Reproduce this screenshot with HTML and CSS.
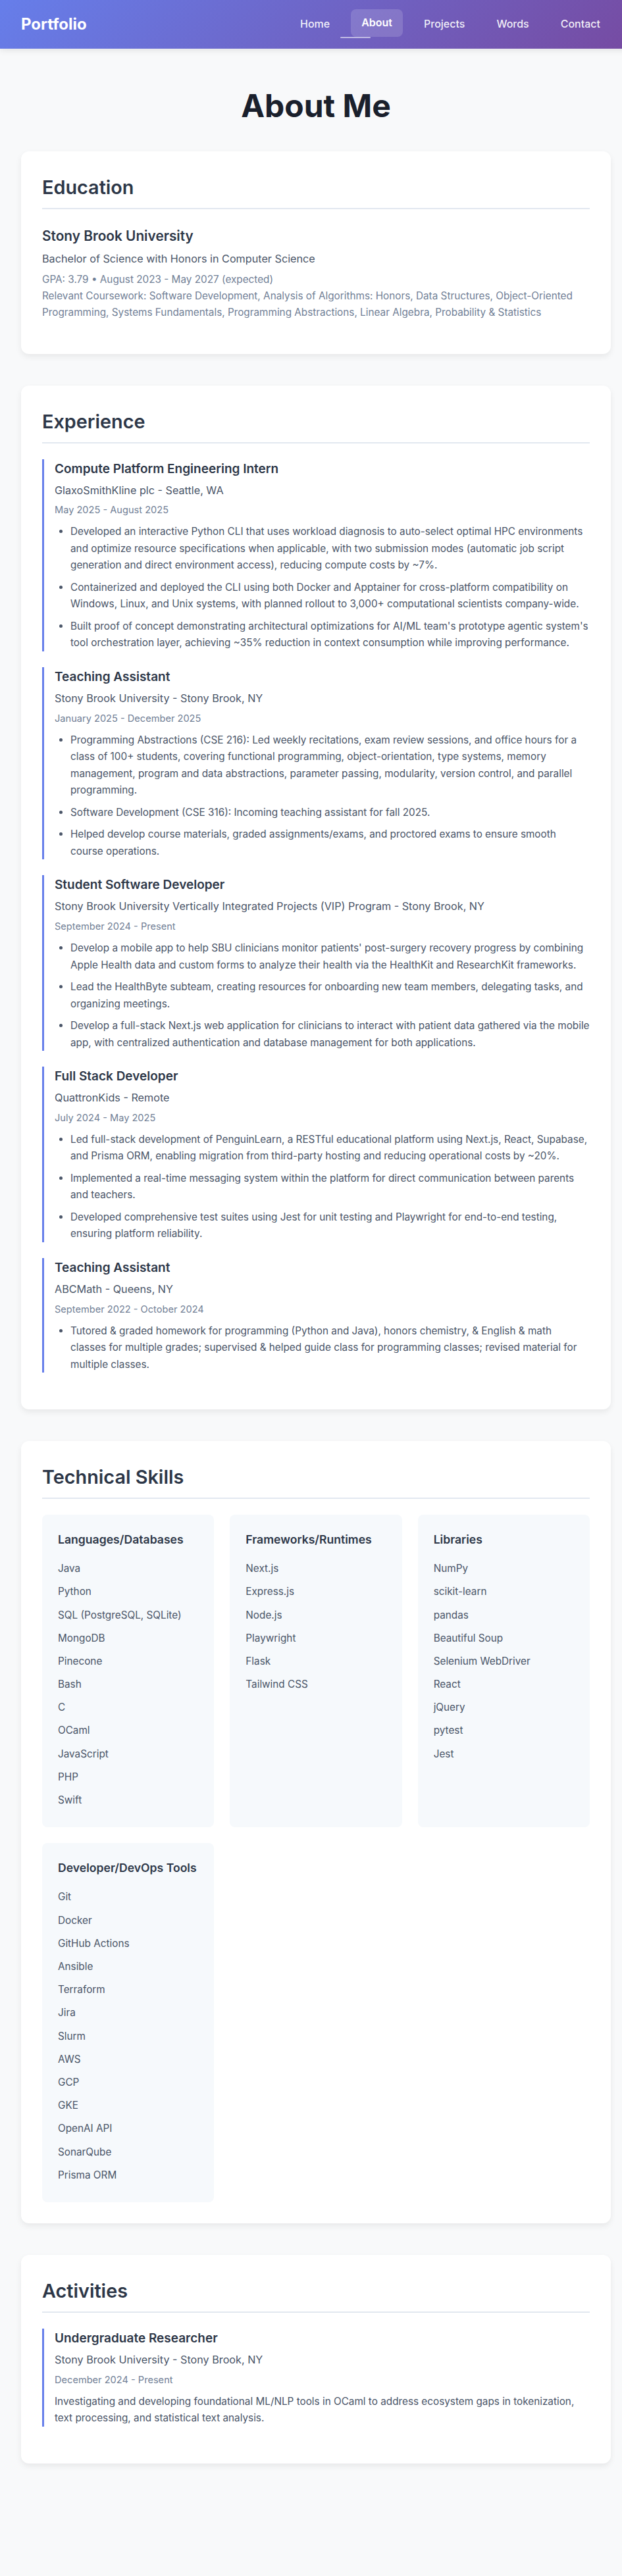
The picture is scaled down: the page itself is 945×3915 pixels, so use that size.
FILE: index.html
```html
<!DOCTYPE html>
<html lang="en">
<head>
<meta charset="utf-8">
<title>About Me - Portfolio</title>
<link rel="stylesheet" href="styles.css">
</head>
<body>
<div class="page">
  <header class="site-header">
    <div class="logo">Portfolio</div>
    <nav>
      <ul class="nav-list">
        <li><a class="nav-link" href="#">Home</a></li>
        <li><a class="nav-link active" href="#">About</a></li>
        <li><a class="nav-link" href="#">Projects</a></li>
        <li><a class="nav-link" href="#">Words</a></li>
        <li><a class="nav-link" href="#">Contact</a></li>
      </ul>
    </nav>
  </header>

  <main class="main">
    <h1 class="page-title">About Me</h1>

    <section class="card">
      <h2 class="section-title">Education</h2>
      <div class="edu-item">
        <h3 class="edu-school">Stony Brook University</h3>
        <p class="edu-degree">Bachelor of Science with Honors in Computer Science</p>
        <p class="edu-meta">GPA: 3.79 • August 2023 - May 2027 (expected)</p>
        <p class="edu-meta">Relevant Coursework: Software Development, Analysis of Algorithms: Honors, Data Structures, Object-Oriented Programming, Systems Fundamentals, Programming Abstractions, Linear Algebra, Probability &amp; Statistics</p>
      </div>
    </section>

    <section class="card">
      <h2 class="section-title">Experience</h2>

      <div class="job">
        <h3 class="job-title">Compute Platform Engineering Intern</h3>
        <p class="job-org">GlaxoSmithKline plc - Seattle, WA</p>
        <p class="job-date">May 2025 - August 2025</p>
        <ul class="job-points">
          <li>Developed an interactive Python CLI that uses workload diagnosis to auto-select optimal HPC environments and optimize resource specifications when applicable, with two submission modes (automatic job script generation and direct environment access), reducing compute costs by ~7%.</li>
          <li>Containerized and deployed the CLI using both Docker and Apptainer for cross-platform compatibility on Windows, Linux, and Unix systems, with planned rollout to 3,000+ computational scientists company-wide.</li>
          <li>Built proof of concept demonstrating architectural optimizations for AI/ML team's prototype agentic system's tool orchestration layer, achieving ~35% reduction in context consumption while improving performance.</li>
        </ul>
      </div>

      <div class="job">
        <h3 class="job-title">Teaching Assistant</h3>
        <p class="job-org">Stony Brook University - Stony Brook, NY</p>
        <p class="job-date">January 2025 - December 2025</p>
        <ul class="job-points">
          <li>Programming Abstractions (CSE 216): Led weekly recitations, exam review sessions, and office hours for a class of 100+ students, covering functional programming, object-orientation, type systems, memory management, program and data abstractions, parameter passing, modularity, version control, and parallel programming.</li>
          <li>Software Development (CSE 316): Incoming teaching assistant for fall 2025.</li>
          <li>Helped develop course materials, graded assignments/exams, and proctored exams to ensure smooth course operations.</li>
        </ul>
      </div>

      <div class="job">
        <h3 class="job-title">Student Software Developer</h3>
        <p class="job-org">Stony Brook University Vertically Integrated Projects (VIP) Program - Stony Brook, NY</p>
        <p class="job-date">September 2024 - Present</p>
        <ul class="job-points">
          <li>Develop a mobile app to help SBU clinicians monitor patients' post-surgery recovery progress by combining Apple Health data and custom forms to analyze their health via the HealthKit and ResearchKit frameworks.</li>
          <li>Lead the HealthByte subteam, creating resources for onboarding new team members, delegating tasks, and organizing meetings.</li>
          <li>Develop a full-stack Next.js web application for clinicians to interact with patient data gathered via the mobile app, with centralized authentication and database management for both applications.</li>
        </ul>
      </div>

      <div class="job">
        <h3 class="job-title">Full Stack Developer</h3>
        <p class="job-org">QuattronKids - Remote</p>
        <p class="job-date">July 2024 - May 2025</p>
        <ul class="job-points">
          <li>Led full-stack development of PenguinLearn, a RESTful educational platform using Next.js, React, Supabase, and Prisma ORM, enabling migration from third-party hosting and reducing operational costs by ~20%.</li>
          <li>Implemented a real-time messaging system within the platform for direct communication between parents and teachers.</li>
          <li>Developed comprehensive test suites using Jest for unit testing and Playwright for end-to-end testing, ensuring platform reliability.</li>
        </ul>
      </div>

      <div class="job">
        <h3 class="job-title">Teaching Assistant</h3>
        <p class="job-org">ABCMath - Queens, NY</p>
        <p class="job-date">September 2022 - October 2024</p>
        <ul class="job-points">
          <li>Tutored &amp; graded homework for programming (Python and Java), honors chemistry, &amp; English &amp; math classes for multiple grades; supervised &amp; helped guide class for programming classes; revised material for multiple classes.</li>
        </ul>
      </div>
    </section>

    <section class="card">
      <h2 class="section-title">Technical Skills</h2>
      <div class="skills-grid">
        <div class="skill-box">
          <h4 class="skill-title">Languages/Databases</h4>
          <ul class="skill-list">
            <li>Java</li>
            <li>Python</li>
            <li>SQL (PostgreSQL, SQLite)</li>
            <li>MongoDB</li>
            <li>Pinecone</li>
            <li>Bash</li>
            <li>C</li>
            <li>OCaml</li>
            <li>JavaScript</li>
            <li>PHP</li>
            <li>Swift</li>
          </ul>
        </div>
        <div class="skill-box">
          <h4 class="skill-title">Frameworks/Runtimes</h4>
          <ul class="skill-list">
            <li>Next.js</li>
            <li>Express.js</li>
            <li>Node.js</li>
            <li>Playwright</li>
            <li>Flask</li>
            <li>Tailwind CSS</li>
          </ul>
        </div>
        <div class="skill-box">
          <h4 class="skill-title">Libraries</h4>
          <ul class="skill-list">
            <li>NumPy</li>
            <li>scikit-learn</li>
            <li>pandas</li>
            <li>Beautiful Soup</li>
            <li>Selenium WebDriver</li>
            <li>React</li>
            <li>jQuery</li>
            <li>pytest</li>
            <li>Jest</li>
          </ul>
        </div>
        <div class="skill-box">
          <h4 class="skill-title">Developer/DevOps Tools</h4>
          <ul class="skill-list">
            <li>Git</li>
            <li>Docker</li>
            <li>GitHub Actions</li>
            <li>Ansible</li>
            <li>Terraform</li>
            <li>Jira</li>
            <li>Slurm</li>
            <li>AWS</li>
            <li>GCP</li>
            <li>GKE</li>
            <li>OpenAI API</li>
            <li>SonarQube</li>
            <li>Prisma ORM</li>
          </ul>
        </div>
      </div>
    </section>

    <section class="card">
      <h2 class="section-title">Activities</h2>
      <div class="job">
        <h3 class="job-title">Undergraduate Researcher</h3>
        <p class="job-org">Stony Brook University - Stony Brook, NY</p>
        <p class="job-date">December 2024 - Present</p>
        <p class="job-desc">Investigating and developing foundational ML/NLP tools in OCaml to address ecosystem gaps in tokenization, text processing, and statistical text analysis.</p>
      </div>
    </section>
  </main>
</div>
</body>
</html>
```
FILE: styles.css
```css
* {
  box-sizing: border-box;
}

html {
  overflow-x: hidden;
}

body {
  margin: 0;
  background: #f8f9fa;
  font-family: Inter, "Noto Sans", "Liberation Sans", sans-serif;
  color: #2d3748;
  line-height: 1.6;
}

.page {
  width: 960px;
}

/* Header */
.site-header {
  position: relative;
  z-index: 2;
  display: flex;
  align-items: center;
  justify-content: space-between;
  padding: 16px 32px;
  background: linear-gradient(135deg, #667eea 0%, #764ba2 100%);
  box-shadow: 0 2px 10px rgba(0, 0, 0, 0.1);
}

.logo {
  color: #ffffff;
  font-size: 24px;
  font-weight: 700;
  line-height: 1.4;
}

.nav-list {
  display: flex;
  gap: 16px;
  list-style: none;
  margin: 0;
  padding: 0;
}

.nav-link {
  position: relative;
  display: block;
  padding: 8px 16px;
  border-radius: 8px;
  color: rgba(255, 255, 255, 0.92);
  text-decoration: none;
  font-size: 16px;
  font-weight: 500;
  line-height: 25.6px;
}

.nav-link.active {
  color: #ffffff;
  font-weight: 600;
  background: rgba(255, 255, 255, 0.15);
  transform: translateY(-2px);
}

.nav-link.active::after {
  content: "";
  position: absolute;
  left: -16px;
  bottom: -2px;
  width: 46px;
  height: 2px;
  border-radius: 1px;
  background: rgba(255, 255, 255, 0.55);
}

/* Main */
.main {
  padding: 58px 32px 125px;
}

.page-title {
  margin: 0 0 41px;
  text-align: center;
  font-size: 48px;
  font-weight: 700;
  line-height: 1.2;
  color: #1a202c;
}

.card {
  background: #ffffff;
  border-radius: 12px;
  padding: 32px;
  margin-bottom: 48px;
  box-shadow: 0 4px 10px rgba(0, 0, 0, 0.07);
}

.section-title {
  margin: 0 0 24px;
  padding-bottom: 8px;
  border-bottom: 2px solid #e2e8f0;
  font-size: 28.8px;
  font-weight: 600;
  line-height: 46px;
  color: #2d3748;
}

/* Education */
.edu-item {
  margin-bottom: 18px;
}

.edu-school {
  margin: 0 0 6px;
  font-size: 20.8px;
  font-weight: 600;
  line-height: 33.3px;
  color: #2d3748;
}

.edu-degree {
  margin: 0 0 5px;
  font-size: 16.2px;
  line-height: 25.6px;
  color: #4a5568;
}

.edu-meta {
  margin: 0;
  font-size: 15.3px;
  line-height: 25.2px;
  color: #718096;
}

/* Jobs */
.job {
  border-left: 3px solid #667eea;
  padding-left: 16px;
  margin-bottom: 24px;
}

.job-title {
  margin: 0 0 4.5px;
  font-size: 19px;
  font-weight: 600;
  line-height: 30.7px;
  color: #2d3748;
}

.job-org {
  margin: 0 0 6px;
  font-size: 16.2px;
  line-height: 25.6px;
  color: #4a5568;
}

.job-date {
  margin: 0 0 8px;
  font-size: 14.6px;
  line-height: 23px;
  color: #718096;
}

.job-points {
  margin: 0;
  padding: 0 0 0 24px;
  font-size: 15.3px;
  line-height: 25.5px;
  color: #4a5568;
}

.job-points li + li {
  margin-top: 8px;
}

.job-desc {
  margin: 0;
  font-size: 15.3px;
  line-height: 25.6px;
  color: #4a5568;
}

/* Skills */
.skills-grid {
  display: grid;
  grid-template-columns: repeat(3, 1fr);
  gap: 24px;
}

.skill-box {
  background: #f6f9fc;
  border-radius: 8px;
  padding: 24px;
}

.skill-box:nth-child(4) {
  align-self: start;
}

.skill-title {
  margin: 0 0 12px;
  font-size: 17.6px;
  font-weight: 600;
  line-height: 28.2px;
  color: #2d3748;
}

.skill-list {
  list-style: none;
  margin: 0;
  padding: 0;
  font-size: 15.3px;
  line-height: 25.6px;
  color: #4a5568;
}

.skill-list li {
  padding: 4.8px 0;
}
```
